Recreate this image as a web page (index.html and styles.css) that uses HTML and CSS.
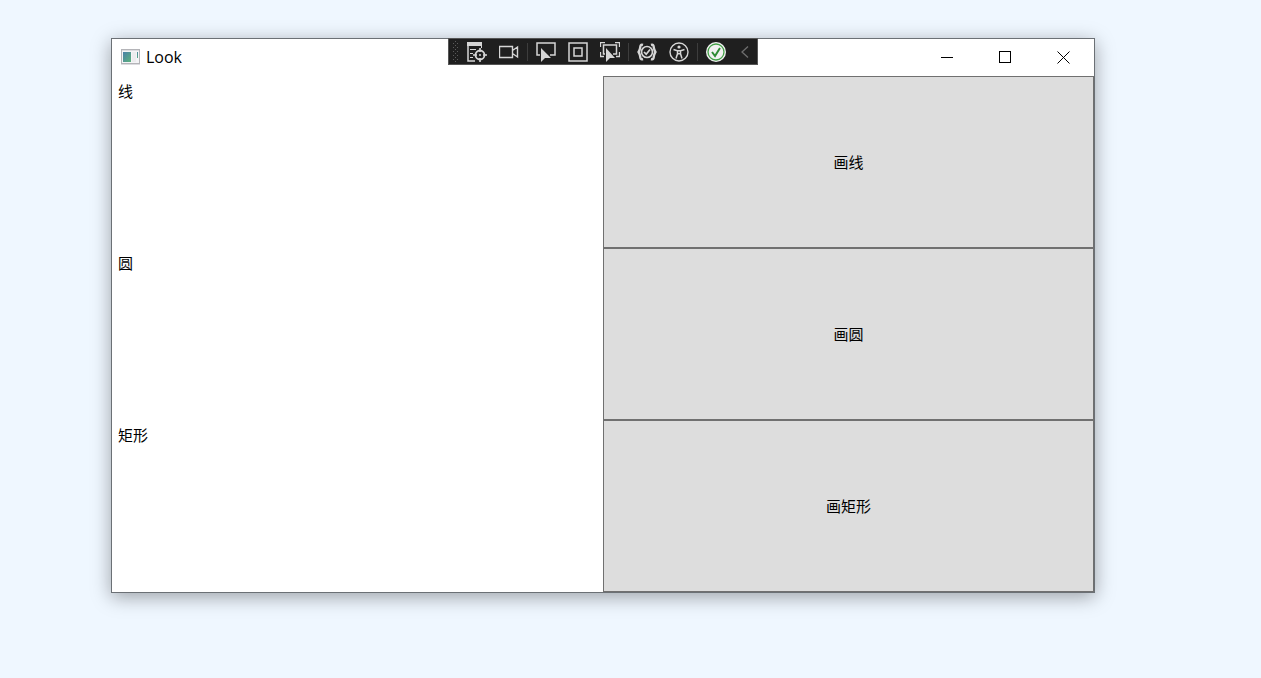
FILE: index.html
```html
<!DOCTYPE html>
<html lang="zh-CN">
  <head>
    <meta charset="UTF-8" />
    <meta name="viewport" content="width=device-width, initial-scale=1.0" />
    <title>Look</title>
    <link rel="stylesheet" href="styles.css">
  </head>
  <body>
    <main class="window">
      <header class="titlebar">
        <svg class="app-icon" width="19" height="16" viewBox="0 0 19 16">
          <defs>
            <linearGradient id="screen" x1="0" y1="0" x2="1" y2="1">
              <stop offset="0" stop-color="#4a7fa8" />
              <stop offset="1" stop-color="#5cb37c" />
            </linearGradient>
          </defs>
          <rect x="0.5" y="0.5" width="18" height="14" fill="#f4f4f6" stroke="#b4b4b8" />
          <path d="M0 15.5h19" stroke="#dcdce0" />
          <path d="M1 1.5h17" stroke="#dcdce0" />
          <rect x="2" y="3" width="8" height="10" fill="url(#screen)" />
          <rect x="11" y="3" width="4" height="10" fill="#ececee" />
          <rect x="16" y="3" width="1" height="6" fill="url(#screen)" />
        </svg>
        <h1 class="title">Look</h1>
        <button type="button" class="caption-button" aria-label="最小化">
          <svg width="13" height="13"><path d="M0 6.5h12" /></svg>
        </button>
        <button type="button" class="caption-button" aria-label="最大化">
          <svg width="13" height="13"><rect x="0.5" y="0.5" width="11" height="11" /></svg>
        </button>
        <button type="button" class="caption-button" aria-label="关闭">
          <svg width="13" height="13"><path d="M0.5 0.5l12 12M12.5 0.5l-12 12" /></svg>
        </button>
      </header>

      <div class="toolbar">
        <svg class="grip" width="12" height="25">
          <defs>
            <pattern id="dots" width="4" height="4" patternUnits="userSpaceOnUse">
              <rect width="1" height="1" fill="#5c5c5c" />
              <rect x="2" y="2" width="1" height="1" fill="#5c5c5c" />
            </pattern>
          </defs>
          <rect x="3" y="2" width="7" height="21" fill="url(#dots)" />
        </svg>
        <button type="button" class="tool" aria-label="实时可视化树">
          <svg width="20" height="20" viewBox="0 0 20 20">
            <path d="M0 0h15v4H0z" fill="#d6d6d6" stroke="none" />
            <path d="M1 4v15h7" stroke-width="1.5" />
            <path d="M3 7.5h6M3 11.5h3M3 15.5h3M14.5 4v2" />
            <circle cx="13" cy="13" r="4.5" stroke-width="1.8" />
            <path d="M13 6v4M13 16v4M6 13h4M16 13h4" stroke-width="1.6" />
            <circle cx="13" cy="13" r="1" fill="#d6d6d6" stroke="none" />
          </svg>
        </button>
        <button type="button" class="tool" aria-label="录制">
          <svg width="20" height="20" viewBox="0 0 20 20">
            <path d="M0.5 4.5h13v11h-13zM13.5 8.5l5-3.500v10l-5-3.500" stroke-width="1.4" />
          </svg>
        </button>
        <span class="separator"></span>
        <button type="button" class="tool" aria-label="选择元素">
          <svg width="20" height="20" viewBox="0 0 20 20">
            <path d="M4 13H1V1h18v12h-5" stroke-width="1.5" />
            <path d="M5 6v14l4-4h6z" fill="#d6d6d6" stroke="none" />
          </svg>
        </button>
        <button type="button" class="tool" aria-label="显示布局装饰器">
          <svg width="20" height="20" viewBox="0 0 20 20">
            <rect x="1" y="1" width="18" height="18" stroke-width="1.5" />
            <rect x="6" y="6" width="8" height="8" stroke-width="1.5" />
          </svg>
        </button>
        <button type="button" class="tool" aria-label="跟踪焦点元素">
          <svg width="20" height="20" viewBox="0 0 20 20">
            <path d="M0.5 5V0.5H5M15 0.5h4.500V5M0.5 10v4.500H4M16 14.500h3.500V10" stroke-width="1.3" />
            <path d="M5 12H3.500V3h13v9H13" stroke-width="1.5" />
            <path d="M6 6v14l4-4h5z" fill="#d6d6d6" stroke="none" />
          </svg>
        </button>
        <span class="separator"></span>
        <button type="button" class="tool" aria-label="绑定失败">
          <svg width="20" height="20" viewBox="0 0 20 20">
            <path d="M6 3C3 2 3.500 4.500 3 6.500S2 9 1.500 10c.5 1 1 1.500 1.500 3.500S3 18 6 17M14 3c3-1 2.500 1.500 3 3.500S18 9 18.500 10c-.5 1-1 1.500-1.500 3.500S17 18 14 17" stroke-width="2.400" />
            <circle cx="10" cy="10" r="5.500" stroke-width="1.700" />
            <path d="M7 10l2.200 2.200L13 7.500" stroke-width="1.700" />
          </svg>
        </button>
        <button type="button" class="tool" aria-label="辅助功能检查">
          <svg width="20" height="20" viewBox="0 0 20 20">
            <circle cx="10" cy="10" r="9" stroke-width="1.4" />
            <circle cx="10" cy="5" r="1.600" fill="#d6d6d6" stroke="none" />
            <path d="M4.500 7.500l4 1.300v3L7 16.500M15.500 7.500l-4 1.300v3L13 16.500M8.500 8.800h3M8.500 11.800h3" stroke-width="1.500" />
          </svg>
        </button>
        <span class="separator"></span>
        <button type="button" class="tool" aria-label="热重载">
          <svg width="20" height="20" viewBox="0 0 20 20">
            <circle cx="10" cy="10" r="10" fill="#f2f2f2" stroke="none" />
            <circle cx="10" cy="10" r="8" stroke="#43a047" stroke-width="1.300" />
            <path d="M6 10l3 4 5-8" stroke="#2e8b34" stroke-width="2" />
          </svg>
        </button>
        <button type="button" class="tool tool-collapse" aria-label="折叠">
          <svg width="8" height="12" viewBox="0 0 8 12">
            <path d="M7 0.5L1 6l6 5.500" stroke="#6e6e6e" stroke-width="1.300" />
          </svg>
        </button>
      </div>

      <section class="grid">
        <div class="shape">线</div>
        <button type="button" class="draw">画线</button>
        <div class="shape">圆</div>
        <button type="button" class="draw">画圆</button>
        <div class="shape">矩形</div>
        <button type="button" class="draw">画矩形</button>
      </section>
    </main>
  </body>
</html>
```

FILE: styles.css
```css
* {
  box-sizing: border-box;
}

body {
  display: flex;
  min-height: 100vh;
  margin: 0;
  padding: 38px 166px 85px 111px;
  background-color: #eff7ff;
  color: #000;
  font-family: "Noto Sans CJK SC", sans-serif;
  font-size: 15px;
  line-height: 20px;
}

button {
  padding: 0;
  color: inherit;
  font: inherit;
}

svg {
  display: block;
  fill: none;
}

.window {
  position: relative;
  display: flex;
  flex: 1;
  flex-direction: column;
  border: 1px solid #6b7075;
  background-color: #fff;
  box-shadow: 0 4px 18px rgba(0, 0, 0, 0.35);
}

.titlebar {
  display: flex;
  align-items: center;
  height: 37px;
  padding: 0 2px 1px 9px;
}

.title {
  flex: 1;
  margin: 0 0 0 6px;
  font-family: "Open Sans", sans-serif;
  font-size: 16px;
  font-weight: 400;
}

.caption-button {
  display: flex;
  align-items: center;
  justify-content: center;
  width: 58px;
  height: 100%;
  border: none;
  background: none;
}

.caption-button svg {
  stroke: #000;
}

/* debug toolbar, floats over the title bar */
.toolbar {
  position: absolute;
  top: -1px;
  left: 50%;
  display: flex;
  align-items: center;
  width: 310px;
  height: 27px;
  border: 1px solid #555;
  background-color: #1f1f1f;
  transform: translateX(-50%);
}

.tool {
  display: flex;
  align-items: center;
  justify-content: center;
  width: 32px;
  height: 25px;
  border: none;
  background: none;
}

.tool svg {
  stroke: #d6d6d6;
}

.tool-collapse {
  width: 25px;
}

.separator {
  width: 1px;
  height: 18px;
  margin: 0 2px;
  background-color: #3d3d3d;
}

.grid {
  display: grid;
  flex: 1;
  grid-template-columns: 1fr 1fr;
  grid-template-rows: repeat(3, 1fr);
}

.shape {
  padding: 5px 6px;
}

.draw {
  border: 1px solid #707070;
  background-color: #ddd;
}
```
